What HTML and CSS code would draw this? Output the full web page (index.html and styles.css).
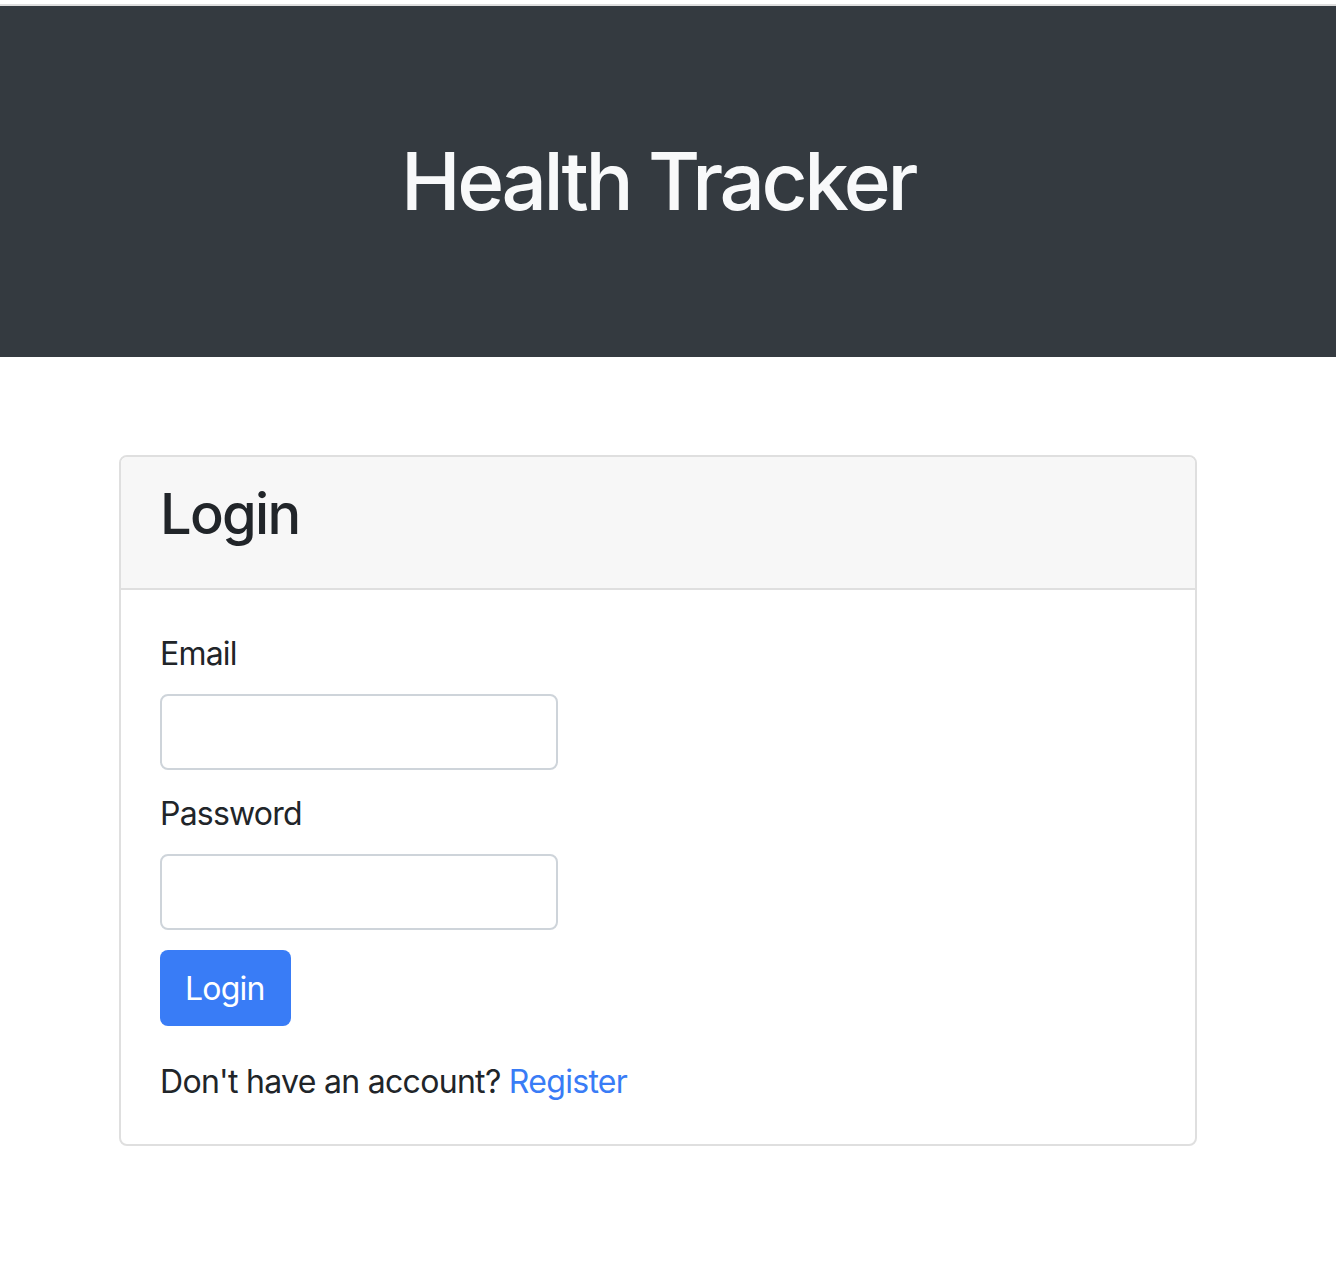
FILE: index.html
```html
<!DOCTYPE html>
<html lang="en">
<head>
<meta charset="utf-8">
<title>Health Tracker</title>
<link rel="stylesheet" href="styles.css">
</head>
<body>
<div class="topline"></div>
<header class="hero">
  <h1 class="hero-title">Health Tracker</h1>
</header>
<main class="container">
  <section class="card">
    <div class="card-header">
      <h3 class="card-title">Login</h3>
    </div>
    <div class="card-body">
      <form class="login-form">
        <div class="form-group">
          <label class="form-label" for="email">Email</label>
          <input class="form-control" type="email" id="email">
        </div>
        <div class="form-group">
          <label class="form-label" for="password">Password</label>
          <input class="form-control" type="password" id="password">
        </div>
        <button class="btn-primary" type="button">Login</button>
      </form>
      <p class="register-line">Don't have an account? <a class="link" href="#">Register</a></p>
    </div>
  </section>
</main>
</body>
</html>
```

FILE: styles.css
```css
* { box-sizing: border-box; }
html, body {
  margin: 0;
  padding: 0;
  background: #ffffff;
  font-family: Inter, "Noto Sans", "Liberation Sans", sans-serif;
  color: #212529;
}
.topline {
  height: 4px;
  border-bottom: 2px solid #dedede;
  box-sizing: content-box;
}
.hero {
  background: #343a40;
  padding: 127px 20px 128px 0;
  text-align: center;
}
.hero-title {
  margin: 0;
  font-size: 80px;
  line-height: 96px;
  font-weight: 500;
  color: #f8f9fa;
  letter-spacing: -3.4px;
}
.container {
  padding: 98px 139px 0 119px;
}
.card {
  width: 1078px;
  border: 2px solid #dfdfdf;
  border-radius: 8px;
  overflow: hidden;
}
.card-header {
  background: #f7f7f7;
  border-bottom: 2px solid #dfdfdf;
  padding: 24px 40px 24px 39px;
}
.card-title {
  margin: 0 0 16px;
  font-size: 56px;
  line-height: 67px;
  font-weight: 500;
  letter-spacing: -1.7px;
}
.card-body {
  padding: 40px 40px 38px 39px;
}
.login-form {
  display: flex;
  flex-direction: column;
  align-items: flex-start;
}
.form-group {
  display: flex;
  flex-direction: column;
  align-items: flex-start;
  margin-bottom: 20px;
}
.form-label {
  font-size: 32px;
  line-height: 48px;
  margin-bottom: 16px;
  letter-spacing: -0.8px;
}
.form-control {
  width: 398px;
  height: 76px;
  border: 2px solid #ced4da;
  border-radius: 8px;
  background: #fff;
  font-size: 32px;
  padding: 12px 24px;
}
.btn-primary {
  height: 76px;
  padding: 0 26px 0 25px;
  border: none;
  border-radius: 8px;
  background: #397cf6;
  color: #fff;
  font-family: inherit;
  font-size: 32px;
  font-weight: 400;
  letter-spacing: -0.8px;
  cursor: pointer;
}
.register-line {
  margin: 32px 0 0;
  font-size: 32px;
  line-height: 48px;
  letter-spacing: -0.7px;
}
.link {
  color: #397cf6;
  text-decoration: none;
}
```
